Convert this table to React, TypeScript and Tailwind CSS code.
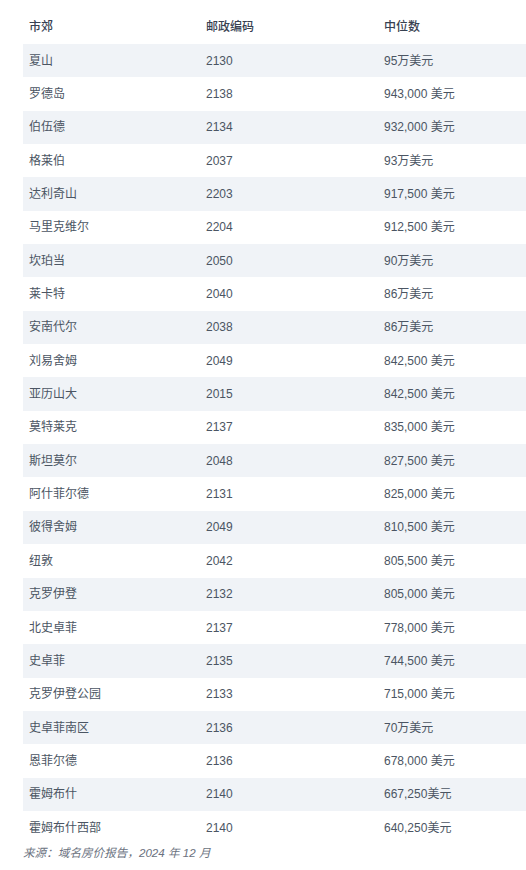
const rows: [string, string, string][] = [
  ["夏山", "2130", "95万美元"],
  ["罗德岛", "2138", "943,000 美元"],
  ["伯伍德", "2134", "932,000 美元"],
  ["格莱伯", "2037", "93万美元"],
  ["达利奇山", "2203", "917,500 美元"],
  ["马里克维尔", "2204", "912,500 美元"],
  ["坎珀当", "2050", "90万美元"],
  ["莱卡特", "2040", "86万美元"],
  ["安南代尔", "2038", "86万美元"],
  ["刘易舍姆", "2049", "842,500 美元"],
  ["亚历山大", "2015", "842,500 美元"],
  ["莫特莱克", "2137", "835,000 美元"],
  ["斯坦莫尔", "2048", "827,500 美元"],
  ["阿什菲尔德", "2131", "825,000 美元"],
  ["彼得舍姆", "2049", "810,500 美元"],
  ["纽敦", "2042", "805,500 美元"],
  ["克罗伊登", "2132", "805,000 美元"],
  ["北史卓菲", "2137", "778,000 美元"],
  ["史卓菲", "2135", "744,500 美元"],
  ["克罗伊登公园", "2133", "715,000 美元"],
  ["史卓菲南区", "2136", "70万美元"],
  ["恩菲尔德", "2136", "678,000 美元"],
  ["霍姆布什", "2140", "667,250美元"],
  ["霍姆布什西部", "2140", "640,250美元"],
];

export default function App() {
  return (
    <div className="min-h-[870px] bg-white pt-[10px] pl-[23px] font-['Liberation_Sans','Noto_Sans_CJK_SC',sans-serif] text-[12px] text-[#4b5563]">
      <div className="grid h-[34px] grid-cols-[177px_178px_1fr] items-center font-medium text-[#374151]">
        <div className="pl-[6px]">市郊</div>
        <div className="pl-[6px]">邮政编码</div>
        <div className="pl-[6px]">中位数</div>
      </div>
      {rows.map(([suburb, code, price], i) => (
        <div
          key={suburb}
          className={`grid h-[33.35px] grid-cols-[177px_178px_1fr] items-center ${i % 2 === 0 ? "bg-[#f0f3f7]" : "bg-white"}`}
        >
          <div className="pl-[6px]">{suburb}</div>
          <div className="pl-[6px]">{code}</div>
          <div className="pl-[6px]">{price}</div>
        </div>
      ))}
      <p className="mt-[1px] text-[11.6px] leading-[16px] italic text-[#6b7280]">来源：域名房价报告，2024 年 12 月</p>
    </div>
  );
}
